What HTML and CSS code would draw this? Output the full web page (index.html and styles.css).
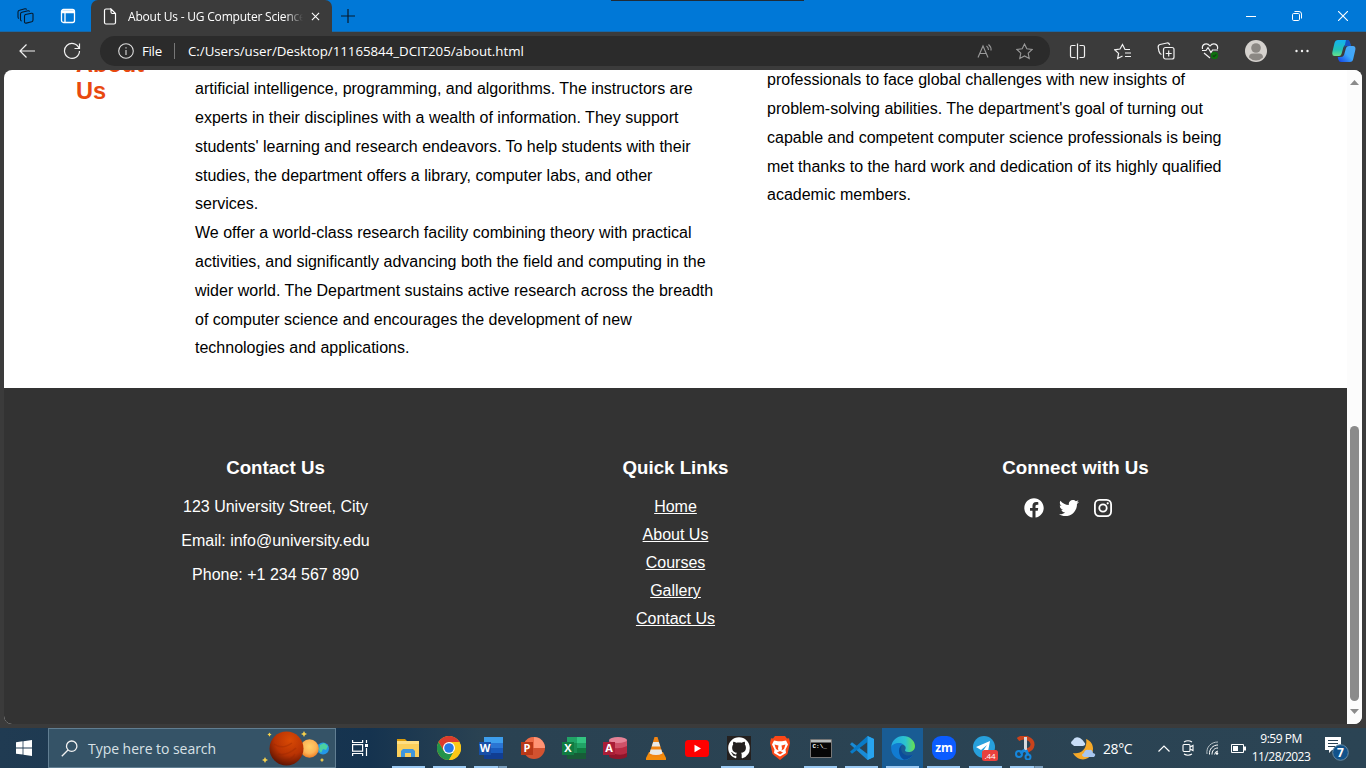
FILE: index.html
```html
<!DOCTYPE html>
<html lang="en">
<head>
<meta charset="utf-8">
<title>About Us - UG Computer Science</title>
<link rel="stylesheet" href="styles.css">
</head>
<body>
<header class="titlebar">
  <div class="tab-tools">
    <svg width="18" height="18" viewBox="0 0 18 18" fill="none" stroke="#071a2c" stroke-width="1.1"><path d="M8.500 7.500l6-1.300q1.500-.2 1.500 1.300v5.500q0 1.300-1.300 1.700l-5.500 1.400q-1.700.3-1.700-1.300V9.200q0-1.400 1-1.700M4.800 14c-1 0-1.300-.7-1.300-1.600V7c0-1 .6-1.600 1.500-1.800l6-1.400c.8-.1 1.400.2 1.600.8M2 11.500c-.7-.2-1-.7-1-1.500V5c0-1 .6-1.600 1.500-1.800L8 1.800c.8-.1 1.400.2 1.600.8"/></svg>
    <svg width="16" height="16" viewBox="0 0 16 16" fill="none" stroke="#fff" stroke-width="1.300"><rect x="1.500" y="1.500" width="13" height="13" rx="2"/><path d="M2 3h12M2 4.500h12M5 5v9"/></svg>
  </div>
  <div class="tab">
    <svg width="14" height="17" viewBox="0 0 14 17" fill="none" stroke="#fff" stroke-width="1.200"><path d="M8 1H3Q1.500 1 1.500 2.500v12Q1.500 16 3 16h8q1.500 0 1.500-1.500V5.500L8 1v3q0 1.500 1.500 1.500h3"/></svg>
    <span class="tab-title">About Us - UG Computer Science</span>
    <svg width="9" height="9" viewBox="0 0 10 10" stroke="#fff" stroke-width="1.200"><path d="M1 1l8 8M9 1L1 9"/></svg>
  </div>
  <svg class="newtab" width="14" height="14" viewBox="0 0 14 14" stroke="#071a2c" stroke-width="1.200"><path d="M7 0v14M0 7h14"/></svg>
  <i class="snap-line"></i>
  <div class="window-buttons">
    <svg width="10" height="10" viewBox="0 0 10 10" stroke="#fff"><path d="M0 5.500h10"/></svg>
    <svg width="10" height="10" viewBox="0 0 10 10" fill="none" stroke="#fff"><rect x=".5" y="2.500" width="7" height="7" rx="1.200"/><path d="M2.500.5H7q2.500 0 2.500 2.500v4.500"/></svg>
    <svg width="10" height="10" viewBox="0 0 10 10" stroke="#fff" stroke-width="1.100"><path d="M0 0l10 10M10 0L0 10"/></svg>
  </div>
</header>

<nav class="toolbar">
  <svg class="back" width="17" height="14" viewBox="0 0 17 14" fill="none" stroke="#f2f2f2" stroke-width="1.200"><path d="M7.500.5L1 7l6.500 6.500M1 7h15"/></svg>
  <svg class="reload" width="18" height="18" viewBox="0 0 18 18" fill="none" stroke="#f2f2f2" stroke-width="1.200"><path d="M16 6.200A7.500 7.500 0 1 0 16.500 9M16.500 1.500v5h-5"/></svg>
  <div class="address">
    <svg width="16" height="16" viewBox="0 0 16 16" fill="none" stroke="#ddd" stroke-width="1.100"><circle cx="8" cy="8" r="7.300"/><path d="M8 7v5M8 4.200v1.400"/></svg>
    <span class="scheme">File</span>
    <i class="divider"></i>
    <span class="url">C:/Users/user/Desktop/11165844_DCIT205/about.html</span>
    <svg class="read" width="17" height="16" viewBox="0 0 17 16" fill="none" stroke="#999" stroke-width="1.100"><path d="M1 14.500L6 3l5 11.500M3 10.500h6M9.500 3q2 1.500 2 4M11.500 1.500q3 2.500 2.500 6"/></svg>
    <svg width="17" height="17" viewBox="0 0 17 17" fill="none" stroke="#999" stroke-width="1.100"><path d="M8.500 1l2.300 4.800 5.300.7-3.900 3.700 1 5.300-4.700-2.600-4.700 2.600 1-5.300L.9 6.500l5.300-.7z"/></svg>
  </div>
  <div class="actions">
    <svg width="17" height="17" viewBox="0 0 17 17" fill="none" stroke="#f2f2f2" stroke-width="1.200"><path d="M6.500 2.500H3Q1.500 2.500 1.500 4v9q0 1.500 1.500 1.500h3.500M10.500 2.500H14q1.500 0 1.500 1.500v9q0 1.500-1.500 1.500h-3.500M8.500.5v16"/></svg>
    <svg width="17" height="17" viewBox="0 0 17 17" fill="none" stroke="#f2f2f2" stroke-width="1.200"><path d="M16 6.500h-5L8.500 1.500 6 6l-5.300.8L4.600 10.400 3.700 15.500 8.500 13M11 10h6M11 13.500h6"/></svg>
    <svg width="18" height="18" viewBox="0 0 18 18" fill="none" stroke="#f2f2f2" stroke-width="1.200"><rect x="6.500" y="5.500" width="10.500" height="11.500" rx="2"/><path d="M11.700 8.500v6M8.700 11.500h6M4.500 12.500C3 12 2.500 11 2 9.500l-.8-4C1 4 1.500 3 3 2.500l7-1.500c1.500-.2 2.200.3 2.700 2"/></svg>
    <svg width="18" height="18" viewBox="0 0 18 18" fill="none" stroke="#f2f2f2" stroke-width="1.200"><path d="M1.500 7C.5 2 6 0 9 4c3-4 8.500-2 7.500 3M1 8.500h4l2-3 3 5 1.500-2.500H17M3 11l6 5"/><circle cx="13.500" cy="13.500" r="3.700" fill="#0e700e" stroke="none"/><path d="M11.800 13.500l1.200 1.200 2.300-2.300" stroke="#183b19"/></svg>
    <svg width="22" height="22" viewBox="0 0 22 22"><circle cx="11" cy="11" r="11" fill="#d5d2ce"/><circle cx="11" cy="8" r="4.800" fill="#8b8884"/><path d="M4 17.500q0-4 4-4h6q4 0 4 4-3 3-7 3t-7-3" fill="#8b8884"/></svg>
    <svg width="16" height="4" viewBox="0 0 16 4" fill="#f2f2f2"><circle cx="2.500" cy="2" r="1.200"/><circle cx="8" cy="2" r="1.200"/><circle cx="13.500" cy="2" r="1.200"/></svg>
    <svg class="copilot" width="24" height="24" viewBox="0 0 24 24">
      <defs><linearGradient id="cpA" x1="0" y1="0" x2="0" y2="1"><stop stop-color="#13b2f2"/><stop offset=".6" stop-color="#22c1b5"/><stop offset="1" stop-color="#67e08a"/></linearGradient><linearGradient id="cpB" x1="1" y1="0" x2="0" y2="1"><stop stop-color="#4ea8f3"/><stop offset=".5" stop-color="#3ba7fb"/><stop offset="1" stop-color="#0f3be4"/></linearGradient></defs>
      <path d="M6 1h9q2 0 2.700 2.500L18.500 6H14q-2 0-2.500 2L9.500 15q-.5 2-2.500 2H2.500Q-.5 17 .5 12.500L2.500 4Q3.300 1 6 1" fill="url(#cpA)"/>
      <path d="M14 1h2q1.500 0 2.100 2.500L19 7h-4q-2 0-2.500 1.500L11 14z" fill="#1453c4"/>
      <path d="M18 23H9q-2 0-2.700-2.500L5.700 18H9q2.300 0 3-2l2-7q.6-2 3-2h4q3.200 0 2.200 4.500l-2 8.500Q20.700 23 18 23" fill="url(#cpB)"/>
    </svg>
  </div>
</nav>

<div class="viewport">
  <div class="page">
    <main class="about">
      <h2>About Us</h2>
      <div class="column">
        <p>artificial intelligence, programming, and algorithms. The instructors are<br>experts in their disciplines with a wealth of information. They support<br>students' learning and research endeavors. To help students with their<br>studies, the department offers a library, computer labs, and other<br>services.</p>
        <p>We offer a world-class research facility combining theory with practical<br>activities, and significantly advancing both the field and computing in the<br>wider world. The Department sustains active research across the breadth<br>of computer science and encourages the development of new<br>technologies and applications.</p>
      </div>
      <div class="column second">
        <p>professionals to face global challenges with new insights of<br>problem-solving abilities. The department's goal of turning out<br>capable and competent computer science professionals is being<br>met thanks to the hard work and dedication of its highly qualified<br>academic members.</p>
      </div>
    </main>
    <footer class="footer">
      <section class="contact">
        <h3>Contact Us</h3>
        <p>123 University Street, City</p>
        <p>Email: info@university.edu</p>
        <p>Phone: +1 234 567 890</p>
      </section>
      <section class="links">
        <h3>Quick Links</h3>
        <ul><li><a href="#">Home</a></li><li><a href="#">About Us</a></li><li><a href="#">Courses</a></li><li><a href="#">Gallery</a></li><li><a href="#">Contact Us</a></li></ul>
      </section>
      <section>
        <h3>Connect with Us</h3>
        <div class="social">
          <svg width="20" height="20" viewBox="0 0 512 512"><path d="M504 256C504 119 393 8 256 8S8 119 8 256c0 123.780 90.690 226.380 209.250 245V327.690h-63V256h63v-54.640c0-62.150 37-96.480 93.670-96.480 27.140 0 55.520 4.840 55.520 4.840v61h-31.280c-30.800 0-40.410 19.120-40.410 38.730V256h68.780l-11 71.690h-57.780V501C413.310 482.380 504 379.780 504 256z"/></svg>
          <svg width="20" height="20" viewBox="0 0 512 512"><path d="M459.370 151.716c.325 4.548.325 9.097.325 13.645 0 138.720-105.583 298.558-298.558 298.558-59.452 0-114.680-17.219-161.137-47.106 8.447.974 16.568 1.299 25.340 1.299 49.055 0 94.213-16.568 130.274-44.832-46.132-.975-84.792-31.188-98.112-72.772 6.498.974 12.995 1.624 19.818 1.624 9.421 0 18.843-1.300 27.614-3.573-48.081-9.747-84.143-51.980-84.143-102.985v-1.299c13.969 7.797 30.214 12.670 47.431 13.319-28.264-18.843-46.781-51.005-46.781-87.391 0-19.492 5.197-37.360 14.294-52.954 51.655 63.675 129.300 105.258 216.365 109.807-1.624-7.797-2.599-15.918-2.599-24.040 0-57.828 46.782-104.934 104.934-104.934 30.213 0 57.502 12.670 76.670 33.137 23.715-4.548 46.456-13.320 66.599-25.340-7.798 24.366-24.366 44.833-46.132 57.827 21.117-2.273 41.584-8.122 60.426-16.243-14.292 20.791-32.161 39.308-52.628 54.253z"/></svg>
          <svg width="18" height="18" viewBox="0 0 18 18"><g fill="none" stroke="#fff" stroke-width="1.800"><rect x=".9" y=".9" width="16.200" height="16.200" rx="4.500"/><circle cx="9" cy="9" r="3.700"/></g><circle cx="13.700" cy="4.300" r="1.100"/></svg>
        </div>
      </section>
    </footer>
  </div>
  <div class="scrollbar">
    <svg width="9" height="5" viewBox="0 0 9 5"><path d="M0 5L4.500 0 9 5z"/></svg>
    <i></i>
    <svg width="9" height="5" viewBox="0 0 9 5"><path d="M0 0L4.500 5 9 0z"/></svg>
  </div>
</div>

<footer class="taskbar">
  <div class="start"><svg width="16" height="16" viewBox="0 0 16 16" fill="#fff"><path d="M0 2.300L6.600 1.300v6.200H0zM7.400 1.200L16 0v7.500H7.400zM0 8.400h6.600v6.200L0 13.700zM7.400 8.400H16V16l-8.600-1.200z"/></svg></div>
  <div class="search">
    <svg width="17" height="17" viewBox="0 0 17 17" fill="none" stroke="#f2f2f2" stroke-width="1.300"><circle cx="10.700" cy="6.200" r="5.200"/><path d="M7 10L.8 16.200"/></svg>
    <span>Type here to search</span>
    <svg class="planets" width="68" height="36" viewBox="0 0 68 36">
      <defs><radialGradient id="red" cx=".6" cy=".25" r=".75"><stop stop-color="#d94a04"/><stop offset=".6" stop-color="#b83203"/><stop offset="1" stop-color="#631603"/></radialGradient><radialGradient id="gold" cx=".5" cy=".4" r=".6"><stop stop-color="#ffd06a"/><stop offset=".6" stop-color="#fcb457"/><stop offset="1" stop-color="#ee7d24"/></radialGradient></defs>
      <circle cx="61" cy="18.500" r="6" fill="#2397e8"/><path d="M58 15l4-2 4 3-2 4-3-1-2 4-2-3z" fill="#4bd0a0"/><circle cx="47.500" cy="18.500" r="9.300" fill="url(#gold)"/><circle cx="24.500" cy="18.500" r="17" fill="url(#red)"/><path d="M12 14q8 6 18-1M16 24q9 2 18-6M20 31q10-1 13-7" fill="none" stroke="#8e2402" stroke-width="1.500" opacity=".3"/>
      <g fill="#f4cf4c"><path d="M42 1l1 2 2 1-2 1-1 2-1-2-2-1 2-1zM3 27l1 2 2 1-2 1-1 2-1-2-2-1 2-1zM7.500 2.500l.8 1.300 1.300.8-1.300.7-.8 1.400-.8-1.400-1.300-.7 1.300-.8zM60 28l.8 1.300 1.300.8-1.300.7-.8 1.400-.8-1.400-1.300-.7 1.300-.8z"/></g>
    </svg>
  </div>
  <div class="taskview"><svg width="16" height="16" viewBox="0 0 16 16" fill="none" stroke="#fff" stroke-width="1.200"><path d="M.6 0v2.500h10V0M.6 16v-2.500h10V16"/><rect x=".6" y="4.600" width="10" height="6.600"/><path d="M14.500 0v3M14.500 8v8"/><path d="M13 4h3v3h-3z" fill="#fff" stroke="none"/></svg></div>
  <div class="apps">
    <div class="app open"><svg width="22" height="20" viewBox="0 0 22 20"><path d="M0 1h8l2 2v4H0z" fill="#d99b0b"/><path d="M0 3h22v16H0z" fill="#fbcf5b"/><path d="M0 3h22v3H0z" fill="#ffdf83"/><path d="M4 19v-6l2-2h10l2 2v6h-4v-4H8v4z" fill="#3f97dd"/></svg></div>
    <div class="app open"><svg width="24" height="24" viewBox="0 0 24 24"><circle cx="12" cy="12" r="12" fill="#f9c417"/><path d="M1.600 6A12 12 0 0 1 22.400 6H12L6.800 15z" fill="#db3b2d"/><path d="M1.600 6A12 12 0 0 0 12 24l5.200-9-10.400 0z" fill="#23934a"/><path d="M12 24l5.200-9L12 6h10.400A12 12 0 0 1 12 24" fill="#fbc817"/><circle cx="12" cy="12" r="6" fill="#fff"/><circle cx="12" cy="12" r="4.800" fill="#2777e6"/></svg></div>
    <div class="app open multi"><svg width="24" height="22" viewBox="0 0 24 22"><path d="M5 0h19v6H5z" fill="#3d9eed"/><path d="M5 6h19v5H5z" fill="#2a75d3"/><path d="M5 11h19v5H5z" fill="#195bbd"/><path d="M5 16h19v6H5z" fill="#113e92"/><rect y="5" width="12" height="13" fill="#174fa7"/><text class="letter" x="6" y="15">W</text></svg></div>
    <div class="app"><svg width="24" height="22" viewBox="0 0 24 22"><circle cx="13" cy="11" r="11" fill="#d35230"/><path d="M13 0a11 11 0 0 1 11 11H13z" fill="#ff9475"/><path d="M13 0A11 11 0 0 0 2 11h11z" fill="#ed6c47"/><rect y="5" width="12" height="13" fill="#b93818"/><text class="letter" x="6" y="15">P</text></svg></div>
    <div class="app"><svg width="24" height="22" viewBox="0 0 24 22"><path d="M5 0h10v22H5z" fill="#198c51"/><path d="M15 0h9v6h-9z" fill="#33c481"/><path d="M5 0h10v6H5z" fill="#21a366"/><path d="M15 6h9v5h-9z" fill="#21a366"/><path d="M15 11h9v5h-9z" fill="#107c41"/><path d="M5 16h19v6H5z" fill="#185c37"/><rect y="5" width="12" height="13" fill="#107c41"/><text class="letter" x="6" y="15">X</text></svg></div>
    <div class="app"><svg width="24" height="23" viewBox="0 0 24 23"><path d="M6 3h18v16c0 4-18 4-18 0z" fill="#90152a"/><path d="M6 3h18v13q-5 3-12 1L6 14z" fill="#b82a42"/><path d="M6 3h18v6q-8 4-18 1z" fill="#cf5168"/><ellipse cx="15" cy="3" rx="9" ry="3" fill="#e58296"/><rect y="5" width="12" height="13" fill="#aa1e37"/><text class="letter" x="6" y="15">A</text></svg></div>
    <div class="app"><svg width="20" height="23" viewBox="0 0 20 23"><path d="M3 15h14l3 6v2H0v-2z" fill="#f48b0b"/><path d="M8.500 0h3L17 18q-7 4-14 0z" fill="#f18412"/><path d="M7.200 5h5.600l1.500 4.500H5.700zM4.700 12.500h10.600l1.200 4q-6.500 3-13 0z" fill="#e9e9e7"/></svg></div>
    <div class="app"><svg width="24" height="17" viewBox="0 0 24 17"><rect width="24" height="17" rx="3.500" fill="#f00"/><path d="M9.500 4.800l6.500 3.700-6.500 3.700z" fill="#fff"/></svg></div>
    <div class="app open"><svg width="24" height="24" viewBox="0 0 24 24"><path fill="#24201f" d="M0 0h24v24H0z"/><path transform="translate(1.200 1.200) scale(1.350)" fill="#fff" d="M8 0C3.580 0 0 3.580 0 8c0 3.540 2.290 6.530 5.470 7.590.4.070.55-.17.55-.38 0-.19-.01-.82-.01-1.490-2.010.37-2.530-.49-2.690-.94-.09-.23-.48-.94-.82-1.130-.28-.15-.68-.52-.01-.53.63-.01 1.080.58 1.230.82.720 1.210 1.870.87 2.330.66.070-.52.280-.87.510-1.070-1.780-.2-3.640-.89-3.640-3.950 0-.87.310-1.590.82-2.150-.08-.2-.36-1.020.08-2.120 0 0 .67-.21 2.200.82.640-.18 1.320-.27 2-.27s1.360.09 2 .27c1.530-1.040 2.200-.82 2.200-.82.440 1.100.160 1.920.080 2.120.51.560.82 1.270.82 2.150 0 3.070-1.870 3.750-3.650 3.950.29.250.54.730.54 1.480 0 1.070-.01 1.930-.01 2.200 0 .21.150.46.550.38A8.010 8.010 0 0 0 16 8c0-4.420-3.580-8-8-8z"/></svg></div>
    <div class="app"><svg width="20" height="24" viewBox="0 0 20 24"><path d="M5 0h10l2 2.500 2-.3L20 7l-2.500 11L10 24 2.500 18 0 7l1-4.800 2 .3z" fill="#fb4717"/><path d="M4 4.500l4 .7h4l4-.7 2 4-2.500 5 .5 3.500L10 20.500 4 17l.5-3.500L2 8.500z" fill="#fff"/><path d="M4.500 8.500l4 1-.5 3 .5 2-2.500-1.500zM15.500 8.500l-4 1 .5 3-.5 2 2.500-1.500zM7 16.500l3-1.500 3 1.500-3 2z" fill="#fb4717"/></svg></div>
    <div class="app open"><svg width="22" height="19" viewBox="0 0 22 19"><path fill="#060606" stroke="#777" d="M.5.500h21v18H.5z"/><path fill="#b9bdbc" d="M1 1h20v2.500H1z"/><text class="prompt" x="2.500" y="9">C:\_</text></svg></div>
    <div class="app open"><svg width="24" height="24" viewBox="0 0 24 24"><path d="M17.500 0L24 3v18l-6.500 3L0 8.300l2-2L17.500 18z" fill="#198bd6"/><path d="M17.500 0v6L2 17.700l-2-2z" fill="#087bc8"/><path d="M17.500 0L24 3v18l-6.500 3z" fill="#27a4ef"/></svg></div>
    <div class="app open active"><svg width="24" height="24" viewBox="0 0 24 24"><defs><linearGradient id="edge"><stop stop-color="#20a7e3"/><stop offset=".6" stop-color="#2cc3cf"/><stop offset="1" stop-color="#68e14d"/></linearGradient></defs><path d="M.2 11C1 4 6 0 12 0c7 0 12 5 12 10 0 4-3 6-6.500 6-3 0-4-1.200-3.200-2.500C17 9 7 4 .2 11" fill="url(#edge)"/><path d="M.2 11C2 7 9 5.500 13 8.500c-4 0-5 4-4 7 1.500 5 7 6 12.700 3.500C19 23 16 24 12 24 5 24-.6 18 .2 11" fill="#117bd1"/><path d="M10.500 9.500C6 13 8 21 13 23.800c3.700-.2 7-2 8.800-5-6.500 2.500-13.500-1.300-11.300-9.300" fill="#0b4c9a"/></svg></div>
    <div class="app open"><svg width="24" height="24" viewBox="0 0 24 24"><rect width="24" height="24" rx="9" fill="#0b5cff"/><text class="zoom" x="12" y="16">zm</text></svg></div>
    <div class="app open"><svg width="26" height="26" viewBox="0 0 26 26"><circle cx="12" cy="12" r="11" fill="#27a0dc"/><path d="M4 12L18 6l-2.500 13-4.500-3 4-6-6 5z" fill="#fff"/><rect x="10" y="15" width="16" height="11" rx="2.500" fill="#e9413d"/><text class="badge" x="18" y="23.700">.44</text></svg></div>
    <div class="app open multi"><svg width="22" height="24" viewBox="0 0 22 24"><path d="M3 3.500C9-1 18 3 17.500 9q-.5 5-7 5.500" fill="none" stroke="#c9431c" stroke-width="4"/><path d="M10 1v15M11 1v14" stroke="#d7dadd" stroke-width="2"/><path d="M10 14l-5 3M11 14l2 5" stroke="#1687dd" stroke-width="3"/><circle cx="4" cy="18" r="3" fill="none" stroke="#1687dd" stroke-width="2"/><circle cx="13" cy="21" r="2.500" fill="none" stroke="#1687dd" stroke-width="2"/></svg></div>
  </div>
  <div class="weather"><svg width="25" height="23" viewBox="0 0 25 23"><path d="M15 2c9 3 9 15 2 19-5 3-12 1-15-5 8 2 15-5 13-14" fill="#f6a928"/><path d="M2 8q-4-2 0-5Q4-1 9 1q3 2 4 4 3 3-1 4H3z" fill="#c8def7"/><path d="M13 20q-4-2 0-4 1-4 5-3 3-1 4 3 4 1 1 4z" fill="#a8c6ef"/></svg><span>28°C</span></div>
  <div class="tray">
    <svg width="12" height="7" viewBox="0 0 12 7" fill="none" stroke="#fff" stroke-width="1.200"><path d="M.5 6.500L6 1l5.500 5.500"/></svg>
    <svg width="12" height="16" viewBox="0 0 12 16" fill="none" stroke="#fff" stroke-width="1.100"><path d="M2 2q4-2.500 8 0M2 14q4 2.500 8 0M8 7l3-1.500v5L8 9"/><rect x="1" y="4.500" width="7" height="7" rx="1"/></svg>
    <svg width="13" height="14" viewBox="0 0 13 14" fill="none" stroke="#fff"><path d="M1 13C0 6 5 1 12 1" stroke="#b5c0c6"/><path d="M3.500 13.500C3 8 7 4 12 4M6 13.500C6 10 8 7 12 7M8.700 13.500q0-3 3.300-3.500"/><circle cx="11" cy="12.500" r="1.200" fill="#fff" stroke="none"/></svg>
    <svg width="15" height="9" viewBox="0 0 15 9" fill="none" stroke="#fff"><path d="M.5.5h12v8H.5z"/><path d="M2 2h5v5H2zM13 2.500h2v4h-2z" fill="#fff" stroke="none"/></svg>
  </div>
  <div class="clock"><span class="time">9:59 PM</span><span>11/28/2023</span></div>
  <div class="notice"><svg width="25" height="25" viewBox="0 0 25 25"><path d="M0 1h16v13H7l-3 3v-3H0z" fill="#fff"/><path d="M3 4.500h10M3 7.500h10M3 10.500h7" stroke="#294253"/><circle cx="15.500" cy="16.500" r="7.800" fill="#11528a" stroke="#6689a1"/><text class="count" x="15.500" y="21">7</text></svg></div>
</footer>
</body>
</html>
```

FILE: styles.css
```css
* { box-sizing: border-box; }
body {
  margin: 0; width: 1366px; height: 768px; overflow: hidden;
  display: flex; flex-direction: column; background: #3b3b3b;
  font-family: "Open Sans", "Noto Sans", sans-serif; color: #fff;
}
svg { display: block; flex: none; }
h2, h3, p, ul { margin: 0; padding: 0; }

.titlebar { height: 32px; flex: none; display: flex; align-items: center; background: #0078d7; position: relative; box-shadow: inset 0 -1px #1768a8; }
.tab-tools { width: 91px; display: flex; gap: 25px; padding-left: 17px; align-items: center; }
.tab { width: 241px; height: 32px; background: #3b3b3b; border-radius: 7px 7px 0 0; display: flex; align-items: center; padding-left: 12px; }
.tab-title { width: 175px; margin: 0 8px 0 11px; overflow: hidden; white-space: nowrap; font-size: 12px; letter-spacing: -.2px; -webkit-mask-image: linear-gradient(90deg, #000 90%, transparent); }
.newtab { margin-left: 9px; }
.snap-line { position: absolute; left: 611px; top: 0; width: 193px; height: 1px; background: #202b36; }
.window-buttons { margin-left: auto; display: flex; gap: 36px; padding-right: 18px; }

.toolbar { height: 38px; flex: none; display: flex; align-items: center; background: #3b3b3b; }
.back { margin-left: 19px; }
.reload { margin-left: 27px; }
.address { width: 950px; height: 30px; margin-left: 19px; border-radius: 15px; background: #2b2b2b; display: flex; align-items: center; padding: 0 17px 0 18px; font-size: 13.300px; }
.scheme { width: 22px; margin-left: 8px; letter-spacing: -.3px; }
.divider { width: 1px; height: 16px; margin: 0 13px 0 10px; background: #777; }
.url { letter-spacing: -.03px; white-space: nowrap; }
.read { margin-left: auto; margin-right: 22px; }
.actions { display: flex; align-items: center; gap: 26px; padding-left: 19px; }
.actions svg:nth-child(2) { margin-left: 2px; }
.actions svg:nth-child(6) { margin-left: 1px; }
.actions .copilot { margin-left: -4px; }

.viewport { height: 654px; flex: none; margin: 0 4px; border-radius: 8px; overflow: hidden; display: flex; background: #fff; }
.page { width: 1343px; overflow: hidden; font: 16px "Liberation Sans", Arial, sans-serif; color: #000; }
.about { height: 318px; display: flex; align-items: flex-start; padding-left: 72px; }
.about h2 { width: 70px; margin: -19px 49px 0 0; font-size: 23.600px; line-height: 27px; color: #e8490f; }
.column { width: 524px; margin: 5.200px 48px 0 0; line-height: 28.800px; white-space: nowrap; }
.second { margin: -3.800px 0 0; }
.footer { height: 336px; padding: 69px 71.500px 0; display: grid; grid-template-columns: repeat(3, 400px); background: #333; color: #fff; text-align: center; }
.footer h3 { font-size: 18.720px; line-height: 22px; }
.contact p { margin-top: 16px; line-height: 18px; }
.footer .contact h3 { margin-bottom: 19px; }
.links ul { list-style: none; margin-top: 19px; display: grid; gap: 10px; line-height: 18px; }
.links a { color: #fff; }
.social { display: flex; justify-content: center; align-items: center; gap: 15px; padding-right: 15px; margin-top: 18.500px; fill: #fff; }
.scrollbar { width: 15px; background: #fcfcfc; display: flex; flex-direction: column; align-items: center; padding: 10px 0 10px; fill: #8b8b8b; }
.scrollbar i { width: 9px; height: 275px; border-radius: 5px; margin: auto 0 8px; background: #8b8b8b; }

.taskbar { height: 40px; margin-top: 4px; flex: none; display: flex; align-items: stretch; background: linear-gradient(90deg, #203b52 0, #15334f 370px, #2a4252 480px, #2b4454 1366px); }
.start, .taskview { width: 48px; display: grid; place-items: center; }
.search { width: 288px; display: flex; align-items: center; padding-left: 12px; background: #355367; border: 1px solid #617e92; color: #d8e1e6; }
.search span { width: 140px; margin-left: 10px; font-size: 14px; letter-spacing: -.04px; white-space: nowrap; }
.planets { margin-left: auto; margin-right: 5px; }
.apps { display: grid; grid-template-columns: repeat(16, 41.230px); margin-left: 3.500px; }
.app { display: grid; place-items: center; position: relative; }
.app:nth-child(n+3):nth-child(-n+11) svg { margin-left: 1.500px; }
.active { background: #195c94; }
.open::after { content: ""; position: absolute; left: 4px; bottom: 0; width: 33px; height: 2px; background: #9bcaf4; }
.multi::after { background: linear-gradient(90deg, #9bcaf4 24px, #47647a 24px, #7a9ebd 25px); }
.letter { font: bold 11px "Open Sans", sans-serif; fill: #fff; text-anchor: middle; }
.prompt { font: bold 6px "Liberation Mono", monospace; fill: #fff; }
.zoom { font: bold 12px "Open Sans", sans-serif; fill: #fff; text-anchor: middle; }
.badge { font: 8px "Open Sans", sans-serif; fill: #fff; text-anchor: middle; }
.count { font: bold 12px "Open Sans", sans-serif; fill: #fff; text-anchor: middle; }
.weather { display: flex; align-items: center; gap: 7px; margin-left: 24px; font-size: 14px; letter-spacing: -.4px; width: 87px; }
.tray { display: flex; align-items: center; gap: 12px; width: 92px; }
.clock { width: 62px; display: flex; flex-direction: column; justify-content: center; align-items: center; font-size: 12px; line-height: 18px; letter-spacing: -.5px; white-space: nowrap; }
.notice { display: flex; align-items: center; margin-left: auto; padding-right: 16px; }
```
